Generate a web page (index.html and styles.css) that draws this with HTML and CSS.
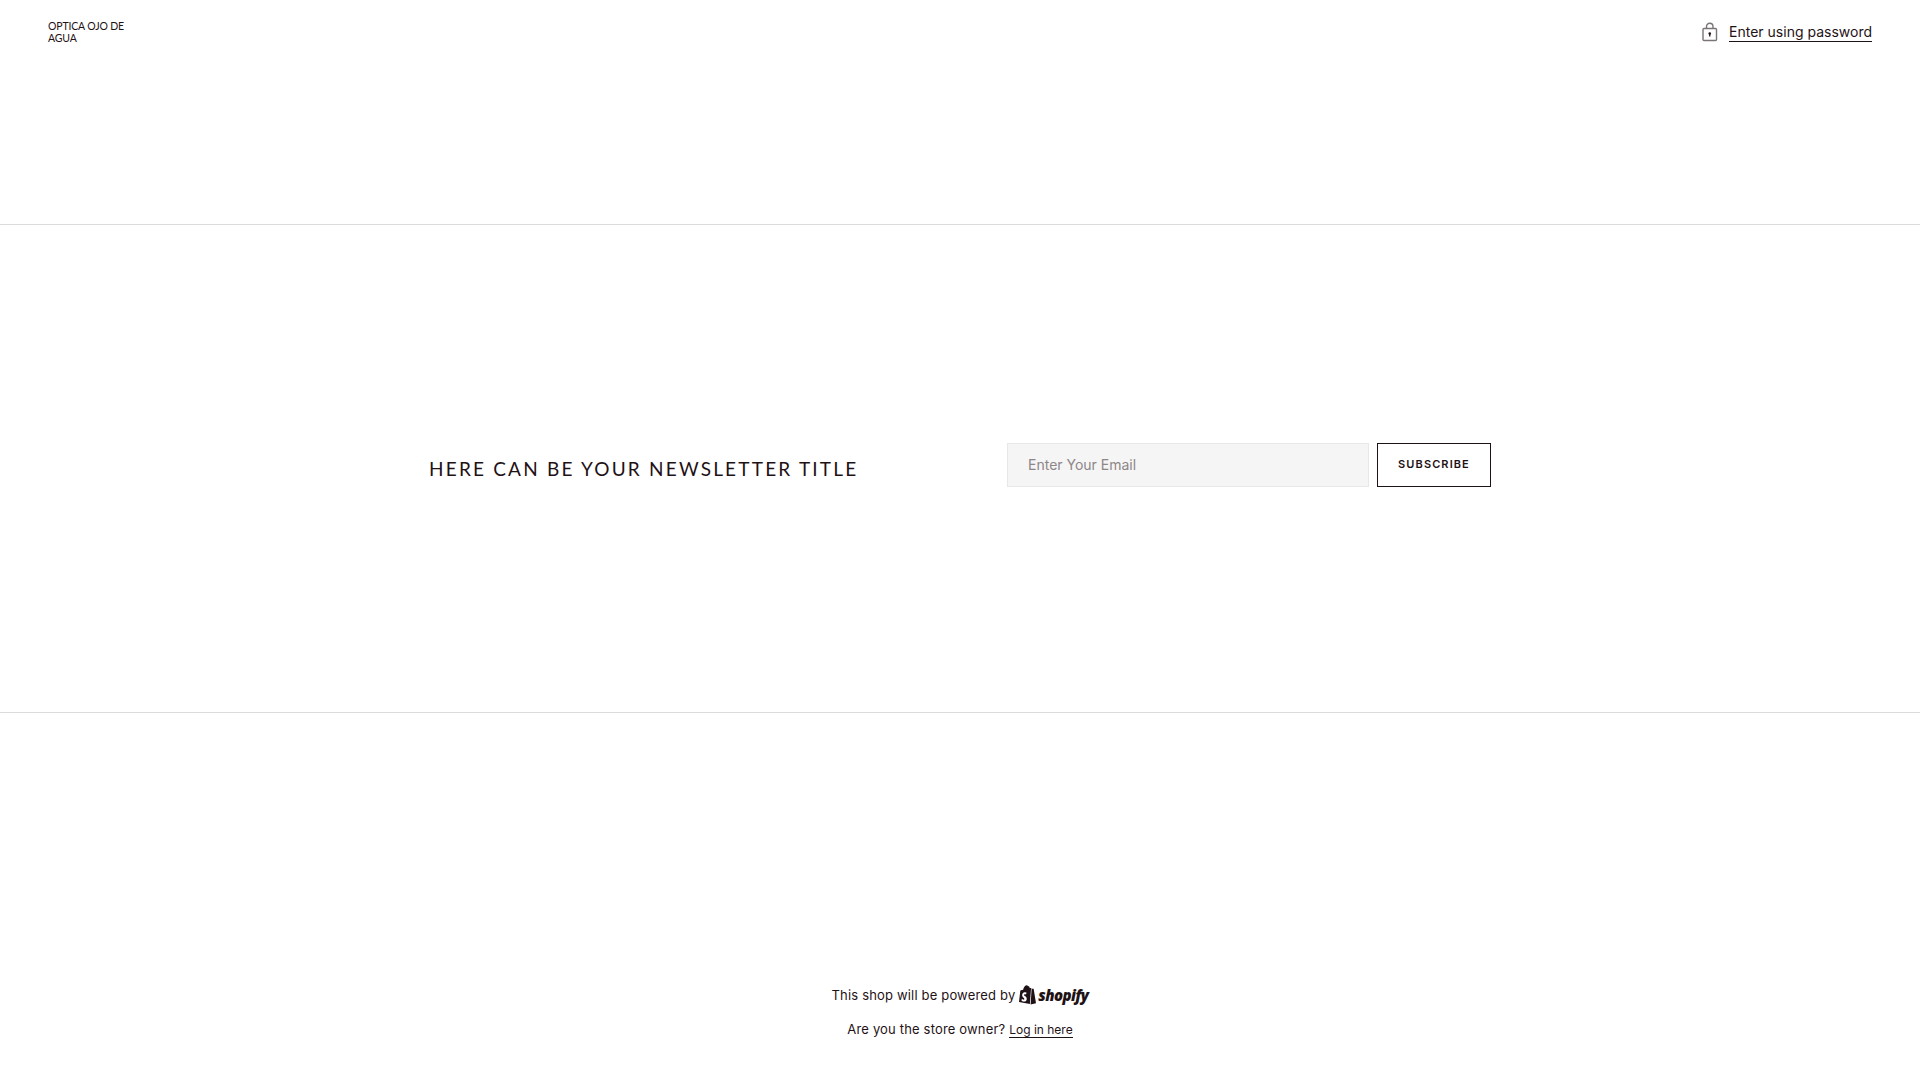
FILE: index.html
```html
<!DOCTYPE html>
<html lang="en">
<head>
    <meta charset="UTF-8">
    <meta name="viewport" content="width=device-width, initial-scale=1.0">
    <title>Optica Ojo de Agua</title>
    <link rel="stylesheet" href="styles.css">
</head>
<body>
    <header class="site-header">
        <div class="logo">OPTICA OJO DE<br>AGUA</div>
        <a class="password-link" href="#">
            <svg class="lock-icon" width="16" height="20" viewBox="0 0 16 20" fill="none">
                <rect x="1" y="6.5" width="13.500" height="12" rx="1" stroke="#7b7476" stroke-width="1.400"/>
                <path d="M4.500 6.500V4.500a3.250 3.250 0 0 1 6.500 0v2" stroke="#7b7476" stroke-width="1.400"/>
                <circle cx="7.750" cy="11.500" r="1.300" fill="#1f1216"/>
                <rect x="7.100" y="11.500" width="1.300" height="3" fill="#1f1216"/>
            </svg>
            <span class="link-text">Enter using password</span>
        </a>
    </header>

    <section class="newsletter">
        <h2 class="newsletter-title">HERE CAN BE YOUR NEWSLETTER TITLE</h2>
        <form class="newsletter-form">
            <input class="email-input" type="email" placeholder="Enter Your Email">
            <button class="btn-subscribe" type="button">SUBSCRIBE</button>
        </form>
    </section>

    <footer class="site-footer">
        <p class="powered">
            This shop will be powered by
            <span class="shopify">
                <svg class="shopify-bag" width="17" height="20" viewBox="0 0 18 21">
                    <path d="M12.200 3.100 11.500 3.300C11.100 2 10.400 1.200 9.500 1.100 9.100.4 8.500.1 8 .2 5.900.5 4.800 3 4.400 4.900L2.100 5.600C1.500 5.800 1.400 5.900 1.300 6.500L0 17.900 11.500 20 12.800 3.200C12.600 3.100 12.400 3.100 12.200 3.100Z" fill="#1f1216"/>
                    <path d="M13.400 3.100 12.300 20.500 18 19.200 15.600 4.400C15.500 4.100 15.300 4 15.100 4L14 3.900Z" fill="#1f1216"/>
                    <path d="M8 8.100 7.400 10C6.700 9.700 5.300 9.600 5.300 10.500 5.300 11.500 8.200 11.900 8.200 14.400 8.200 16.300 7 17.500 5.400 17.500 3.500 17.500 2.600 16.300 2.600 16.300L3.100 14.600C3.100 14.600 4.100 15.500 4.900 15.500 5.500 15.500 5.700 15.100 5.700 14.700 5.700 13.300 3.300 13.200 3.300 10.800 3.300 8.800 4.700 6.900 7.500 7.800Z" fill="#fff"/>
                </svg>
                <span class="shopify-word">shopify</span>
            </span>
        </p>
        <p class="owner">Are you the store owner? <a class="login-link" href="#">Log in here</a></p>
    </footer>
</body>
</html>
```

FILE: styles.css
```css
body {
    margin: 0;
    padding: 0;
    min-height: 100vh;
    background: #fff;
    font-family: 'Inter', sans-serif;
    color: #1f1216;
}

a {
    color: inherit;
    text-decoration: none;
}

.site-header {
    height: 225px;
    box-sizing: border-box;
    padding: 20px 48px 0;
    display: flex;
    justify-content: space-between;
    align-items: flex-start;
    border-bottom: 1px solid #dcdadb;
}

.logo {
    font-family: 'Lato', sans-serif;
    font-size: 10.5px;
    line-height: 12px;
    letter-spacing: -0.15px;
    color: #1f1216;
}

.password-link {
    display: flex;
    align-items: flex-start;
    gap: 11px;
    font-size: 14px;
    padding-top: 2px;
}

.link-text {
    margin-top: 1px;
    line-height: 18px;
    border-bottom: 1px solid #1f1216;
}

.newsletter {
    height: 488px;
    box-sizing: border-box;
    padding: 218px 429px 0;
    display: flex;
    justify-content: space-between;
    align-items: flex-start;
    border-bottom: 1px solid #dcdadb;
}

.newsletter-title {
    margin: 0;
    padding-top: 11px;
    font-family: 'Lato', sans-serif;
    font-size: 19px;
    line-height: 30px;
    font-weight: 400;
    letter-spacing: 2.2px;
}

.newsletter-form {
    display: flex;
    gap: 8px;
}

.email-input {
    width: 362px;
    height: 44px;
    box-sizing: border-box;
    padding: 0 20px 2px;
    background: #f6f5f5;
    border: 1px solid #e8e7e7;
    font-family: 'Inter', sans-serif;
    font-size: 14px;
    color: #1f1216;
}

.email-input::placeholder {
    color: #8d8688;
    opacity: 1;
}

.btn-subscribe {
    width: 114px;
    height: 44px;
    background: #fff;
    border: 1px solid #1f1216;
    font-family: 'Inter', sans-serif;
    font-size: 11px;
    font-weight: 600;
    letter-spacing: 1.1px;
    color: #1f1216;
    padding: 0 0 2px;
}

.site-footer {
    padding-top: 270px;
    text-align: center;
    font-size: 13px;
    letter-spacing: 0.17px;
}

.site-footer p {
    margin: 0;
}

.powered {
    display: flex;
    justify-content: center;
    align-items: center;
    gap: 4px;
    height: 24px;
}

.shopify {
    display: flex;
    align-items: center;
    gap: 2px;
}

.shopify-word {
    font-family: 'Open Sans', sans-serif;
    font-size: 15px;
    font-weight: 800;
    font-style: italic;
    letter-spacing: -0.6px;
}

.owner {
    margin-top: 10px !important;
    height: 24px;
    line-height: 24px;
}

.login-link {
    font-size: 12px;
    letter-spacing: 0;
    border-bottom: 1px solid #1f1216;
}
```
